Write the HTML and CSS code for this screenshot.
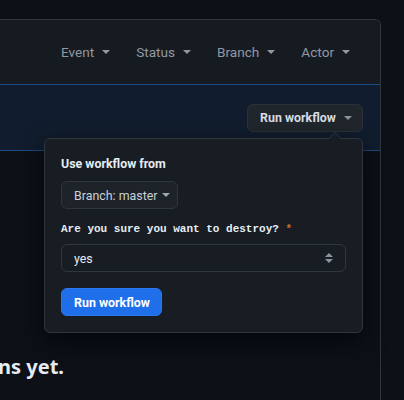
FILE: index.html
```html
<!DOCTYPE html>
<html>
<head>
<meta charset="utf-8">
<link rel="stylesheet" href="styles.css">
</head>
<body>
<div class="box">
  <div class="filters">
    <span class="filter">Event <i class="caret"></i></span>
    <span class="filter">Status <i class="caret"></i></span>
    <span class="filter">Branch <i class="caret"></i></span>
    <span class="filter">Actor <i class="caret"></i></span>
  </div>
  <div class="band">
    <button class="btn">Run workflow <i class="caret"></i></button>
  </div>
  <div class="blank">
    <h3 class="blank-title">This workflow has no runs yet.</h3>
  </div>
</div>
<div class="popover">
  <div class="pop-label">Use workflow from</div>
  <button class="btn branch">Branch: master <i class="caret"></i></button>
  <div class="q-label">Are you sure you want to destroy? <span class="req">*</span></div>
  <div class="select">
    <span>yes</span>
    <svg class="updown" width="8" height="12" viewBox="0 0 8 12"><path d="M4 1 L8 5 H0 Z M0 7 H8 L4 11 Z" fill="#8b949e"/></svg>
  </div>
  <button class="btn primary">Run workflow</button>
</div>
</body>
</html>
```
FILE: styles.css
```css
* { box-sizing: border-box; }
html, body { margin: 0; padding: 0; }
body {
  background: #0d1117;
  width: 404px;
  height: 400px;
  overflow: hidden;
  font-family: Roboto, "Liberation Sans", sans-serif;
  color: #e6edf3;
  position: relative;
}
.box {
  margin-top: 19px;
  margin-left: -40px;
  width: 421px;
  height: 400px;
  border: 1px solid #30363d;
  border-bottom: none;
  border-radius: 6px 6px 0 0;
  overflow: hidden;
}
.filters {
  height: 64px;
  background: #161b22;
  display: flex;
  justify-content: flex-end;
  align-items: center;
  gap: 26px;
  padding-right: 30px;
}
.filter {
  font-size: 13.6px;
  color: #9198a1;
  display: flex;
  align-items: center;
  gap: 8px;
  white-space: nowrap;
}
.caret {
  display: inline-block;
  width: 0;
  height: 0;
  border-left: 4px solid transparent;
  border-right: 4px solid transparent;
  border-top: 4px solid currentColor;
}
.band {
  height: 67px;
  background: #111d2e;
  border-top: 1px solid #1d4b85;
  border-bottom: 1px solid #1d4b85;
  display: flex;
  justify-content: flex-end;
  align-items: center;
  padding-right: 17px;
}
.btn {
  font-family: inherit;
  height: 28px;
  border-radius: 6px;
  border: 1px solid #30363d;
  background: #21262d;
  color: #c9d1d9;
  font-size: 12.4px;
  font-weight: 700;
  display: inline-flex;
  align-items: center;
  padding: 0 12px;
  gap: 8px;
  white-space: nowrap;
}
.band .btn {
  width: 116px;
  color: #d6dde5;
  border-color: #2b3139;
  justify-content: space-between;
}
.band .btn .caret { color: #8b949e; }
.blank {
  padding-top: 201px;
  display: flex;
  justify-content: flex-end;
  width: 103px;
}
.blank-title {
  margin: 0;
  font-family: "Noto Sans", Roboto, sans-serif;
  font-size: 20px;
  line-height: 30px;
  font-weight: 700;
  white-space: nowrap;
  color: #e6edf3;
}
.popover {
  position: absolute;
  left: 44px;
  top: 138px;
  width: 319px;
  height: 195px;
  background: #181c23;
  border: 1px solid #30363d;
  border-radius: 6px;
  box-shadow: 0 8px 24px rgba(1, 4, 9, 0.8);
  padding: 16px;
}
.popover::before, .popover::after {
  content: "";
  position: absolute;
  right: 20px;
  width: 0;
  height: 0;
  border-left: 7px solid transparent;
  border-right: 7px solid transparent;
}
.popover::before {
  top: -7px;
  border-bottom: 7px solid #30363d;
}
.popover::after {
  top: -6px;
  border-bottom: 7px solid #181c23;
}
.pop-label {
  font-size: 12.4px;
  font-weight: 700;
  line-height: 18px;
  color: #e6edf3;
  white-space: nowrap;
}
.branch {
  margin-top: 8px;
  width: 117px;
  font-weight: 400;
  color: #c9d1d9;
  background: #1e232a;
  gap: 5px;
}
.branch .caret { color: #a0a7b0; }
.q-label {
  margin-top: 11px;
  font-family: "Liberation Mono", "DejaVu Sans Mono", monospace;
  font-size: 11px;
  font-weight: 700;
  line-height: 18px;
  color: #e6edf3;
  white-space: nowrap;
}
.req { color: #d2682e; }
.select {
  margin-top: 6px;
  height: 28px;
  border: 1px solid #30363d;
  border-radius: 6px;
  display: flex;
  align-items: center;
  justify-content: space-between;
  padding: 0 12px;
  font-size: 12.4px;
  color: #e6edf3;
}
.primary {
  margin-top: 16px;
  width: 101px;
  background: #1f6feb;
  border-color: #2a78ee;
  color: #ffffff;
}
```
